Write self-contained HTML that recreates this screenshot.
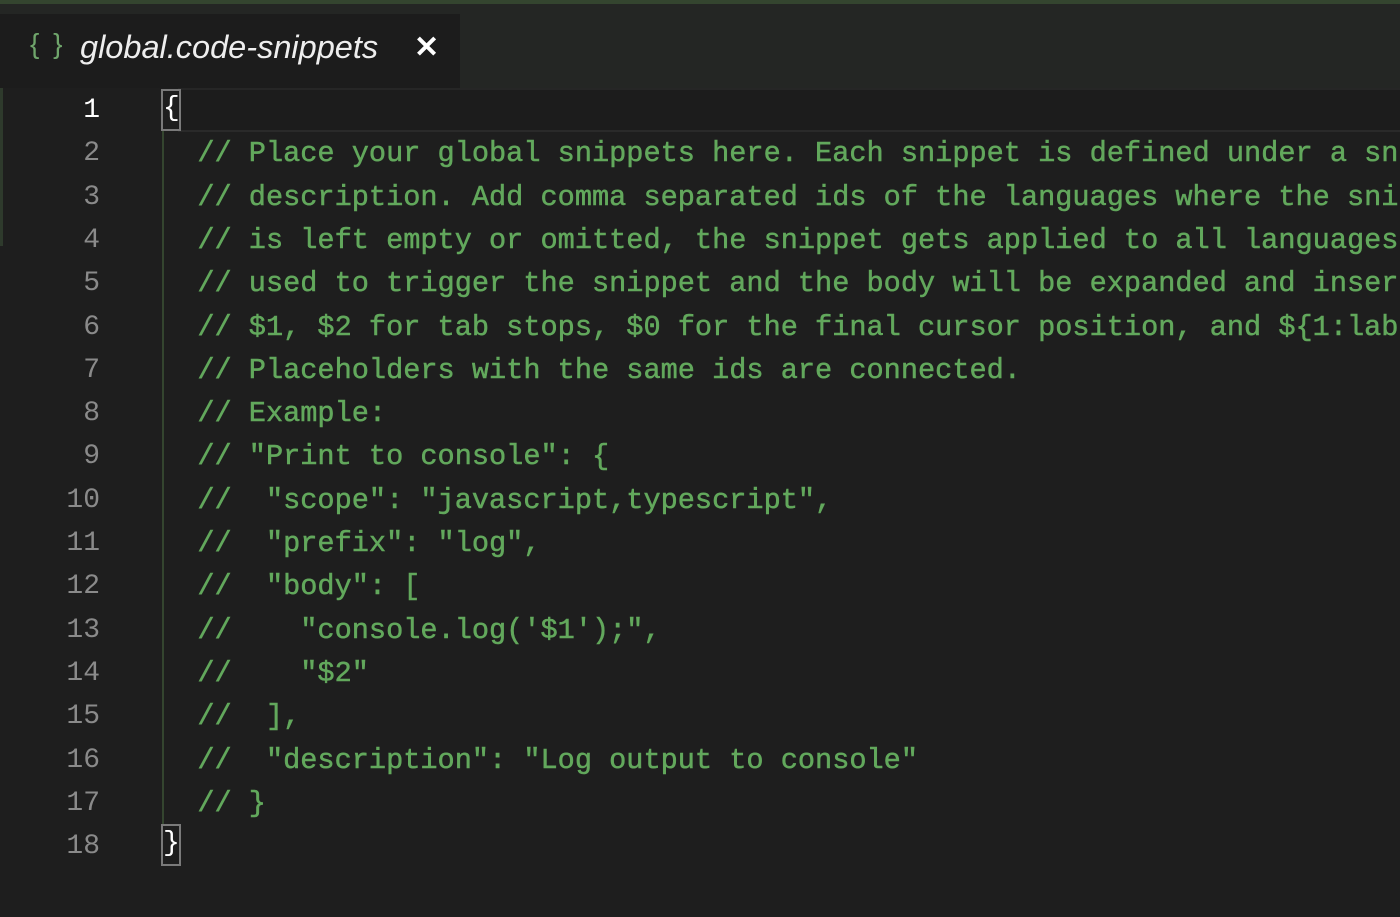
<!DOCTYPE html>
<html><head><style>
body{margin:0;width:1400px;height:917px;background:#1e1e1e;overflow:hidden;position:relative;font-family:"Liberation Mono",monospace}
.wrap{position:absolute;left:0;top:0;width:1400px;height:917px;overflow:hidden}
.top{position:absolute;left:0;top:0;width:1400px;height:4px;background:#34452f}
.bar{position:absolute;left:0;top:4px;width:1400px;height:84px;background:#242624}
.tab{position:absolute;left:0;top:14px;width:460px;height:74px;background:#1c1c1c}
.tab .ic{position:absolute;left:30px;top:14px;color:#6fa56b;font:28px "Liberation Sans",sans-serif;letter-spacing:3px}
.tab .t{position:absolute;left:80px;top:15px;color:#eee;font:italic 32.5px "Liberation Sans",sans-serif}
.tab .x{position:absolute;left:414px;top:16px;color:#fff;font:bold 30px "Liberation Sans",sans-serif}
.hl{position:absolute;left:178px;top:88px;width:1222px;height:40px;border-top:2px solid #262626;border-bottom:2px solid #2a2a2a;background:#1c1c1c}
.guide{position:absolute;left:162px;top:130px;width:2px;height:694px;background:#34452f}
.ln{position:absolute;left:40px;width:60px;text-align:right;color:#8a8a8a;font-size:28px}
.code{position:absolute;left:163px;white-space:pre;color:#62a85c;font-size:28.6px;-webkit-text-stroke:0.5px #62a85c}
.br{position:absolute;left:161px;width:16px;height:38px;border:2px solid #7a7a7a;color:#fff;font-size:28px;line-height:36px;text-align:center}
.gutmark{position:absolute;left:0;top:88px;width:3px;height:158px;background:#2e3a2c}
</style></head><body><div class="wrap">
<div class="top"></div><div class="bar"></div>
<div class="tab"><span class="ic">{ }</span><span class="t">global.code-snippets</span><span class="x">✕</span></div>
<div class="hl"></div>
<div class="gutmark"></div>
<div class="guide"></div>
<div class="br" style="top:89px">{</div>
<div class="br" style="top:824px">}</div>
<div id="lines"></div>
</div>
<script>
var L=["","  // Place your global snippets here. Each snippet is defined under a snippet name and has a scope, prefix, body and",
"  // description. Add comma separated ids of the languages where the snippet is applicable in the scope field. If scope",
"  // is left empty or omitted, the snippet gets applied to all languages. The prefix is what is",
"  // used to trigger the snippet and the body will be expanded and inserted. Possible variables are:",
"  // $1, $2 for tab stops, $0 for the final cursor position, and ${1:label}, ${2:another} for placeholders.",
"  // Placeholders with the same ids are connected.",
"  // Example:",
"  // \"Print to console\": {",
"  //  \"scope\": \"javascript,typescript\",",
"  //  \"prefix\": \"log\",",
"  //  \"body\": [",
"  //    \"console.log('$1');\",",
"  //    \"$2\"",
"  //  ],",
"  //  \"description\": \"Log output to console\"",
"  // }",""];
var h="";
for(var i=0;i<18;i++){var y=95+i*43.3;
h+='<div class="ln" style="top:'+(y)+'px;'+(i==0?'color:#fff':'')+'">'+(i+1)+'</div>';
if(L[i])h+='<div class="code" style="top:'+(y-1)+'px">'+L[i].replace(/&/g,'&amp;').replace(/</g,'&lt;')+'</div>';}
document.getElementById('lines').innerHTML=h;
</script>
</body></html>
